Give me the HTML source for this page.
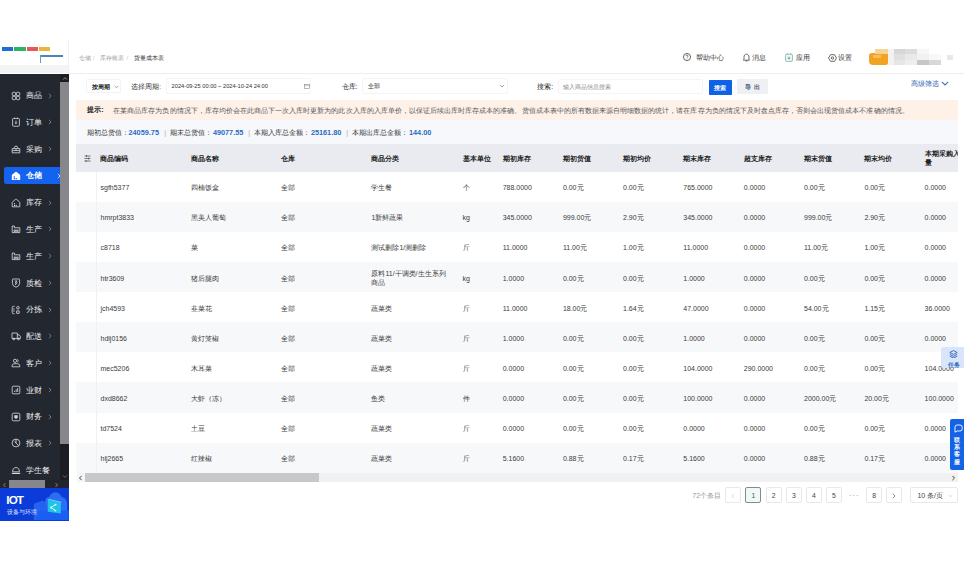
<!DOCTYPE html>
<html><head><meta charset="utf-8">
<style>
*{margin:0;padding:0;box-sizing:border-box}
html,body{width:964px;height:563px;overflow:hidden;background:#fff}
body{position:relative;font-family:"Liberation Sans",sans-serif;color:#333;font-size:7px;line-height:1}
.a{position:absolute;white-space:nowrap}
#sb{position:absolute;left:0;top:73.5px;width:69px;height:415px;background:#23272f;overflow:hidden}
.mi{position:absolute;left:0;width:60px;height:17px}
.mi .ic{position:absolute;left:10.5px;top:3.5px;line-height:0}
.mi .tx{position:absolute;left:25.8px;top:5.1px;font-size:8px;color:#eef0f3;line-height:8px}
.mi .ch{position:absolute;left:47.5px;top:5.5px}
.th{position:absolute;top:0.8px;height:28px;display:flex;align-items:center;font-weight:bold;color:#222;font-size:7px;line-height:8.8px}
.td{position:absolute;height:30px;display:flex;align-items:center;color:#3a3a3a;font-size:7px;line-height:8.7px;padding-top:3.9px}
.btn{position:absolute;border:1px solid #e6e8eb;border-radius:2px;background:#fff;display:flex;align-items:center;justify-content:center;font-size:6.8px;color:#444;padding-top:1.8px}
</style></head><body>

<div class="a" style="left:0;top:40px;width:68px;height:33.5px;background:#fff"></div>
<div class="a" style="left:0;top:64.5px;width:68px;height:8px;background:#f3f4f6"></div>
<div class="a" style="left:1.8px;top:47.4px;width:11.3px;height:3.7px;background:#1d6fd8"></div>
<div class="a" style="left:13.8px;top:47.4px;width:12px;height:3.7px;background:#2cb463"></div>
<div class="a" style="left:26.5px;top:47.4px;width:11.3px;height:3.7px;background:#e05a5a"></div>
<div class="a" style="left:38.9px;top:47.4px;width:11.2px;height:3.7px;background:#eeb33a"></div>
<div class="a" style="left:40px;top:55px;width:22.8px;height:1.8px;background:#4a86b8"></div>
<div class="a" style="left:40px;top:55px;width:1.2px;height:7.5px;background:#6a9cc6"></div>
<div class="a" style="left:68px;top:40px;width:1px;height:33.5px;background:#f0f0f0"></div>

<div id="sb">
<div class="mi" style="top:13.60px"><div class="ic"><svg width="10" height="10" viewBox="0 0 10 10"><g stroke="#d4d7dc" fill="none" stroke-width="0.85" stroke-linejoin="round"><circle cx="3" cy="3" r="1.9"/><circle cx="7" cy="3" r="1.9"/><circle cx="3" cy="7" r="1.9"/><circle cx="7" cy="7" r="1.9"/></g></svg></div><div class="tx">商品</div><div class="ch" style="left:47.5px"><svg width="4" height="6" viewBox="0 0 4 6"><path d="M1 0.8l2 2.2-2 2.2" stroke="#8a8d93" fill="none" stroke-width="0.8"/></svg></div></div>
<div class="mi" style="top:40.36px"><div class="ic"><svg width="10" height="10" viewBox="0 0 10 10"><g stroke="#d4d7dc" fill="none" stroke-width="0.85" stroke-linejoin="round"><rect x="1.6" y="1.4" width="6.8" height="7.8" rx="0.8"/><path d="M3.6 0.7v1.4M6.4 0.7v1.4"/><path d="M5 3.6v3M3.9 5.6L5 6.7l1.1-1.1"/></g></svg></div><div class="tx">订单</div><div class="ch" style="left:47.5px"><svg width="4" height="6" viewBox="0 0 4 6"><path d="M1 0.8l2 2.2-2 2.2" stroke="#8a8d93" fill="none" stroke-width="0.8"/></svg></div></div>
<div class="mi" style="top:67.12px"><div class="ic"><svg width="10" height="10" viewBox="0 0 10 10"><g stroke="#d4d7dc" fill="none" stroke-width="0.85" stroke-linejoin="round"><path d="M1.2 4.6h7.6v4.2H1.2z"/><path d="M2.8 4.6L4 2.2h2l1.2 2.4"/><path d="M1.2 6.6h7.6M5 4.6v2"/></g></svg></div><div class="tx">采购</div><div class="ch" style="left:47.5px"><svg width="4" height="6" viewBox="0 0 4 6"><path d="M1 0.8l2 2.2-2 2.2" stroke="#8a8d93" fill="none" stroke-width="0.8"/></svg></div></div>
<div class="mi" style="top:93.88px;left:4px;width:56px;background:#1463ee;border-radius:2px 0 0 2px"><div class="ic" style="left:7px"><svg width="10" height="10" viewBox="0 0 10 10"><path d="M0.8 9V4.6Q0.8 4 1.3 3.6L4.4 1.1Q5 0.6 5.6 1.1L8.7 3.6Q9.2 4 9.2 4.6V9z" fill="#fff"/><rect x="2.7" y="5.3" width="1.3" height="1.2" fill="#1463ee"/><rect x="2.7" y="7.1" width="1.3" height="1.2" fill="#1463ee"/><rect x="4.6" y="7.1" width="1.3" height="1.2" fill="#1463ee"/></svg></div><div class="tx" style="left:21.8px;color:#fff;font-weight:bold">仓储</div><div class="ch" style="left:53px"><svg width="4" height="6" viewBox="0 0 4 6"><path d="M1 0.8l2 2.2-2 2.2" stroke="#fff" fill="none" stroke-width="0.8"/></svg></div></div>
<div class="mi" style="top:120.64px"><div class="ic"><svg width="10" height="10" viewBox="0 0 10 10"><g stroke="#d4d7dc" fill="none" stroke-width="0.85" stroke-linejoin="round"><path d="M1.2 8.8V4.6Q1.2 4.1 1.6 3.8L4.5 1.4Q5 1 5.5 1.4L8.4 3.8Q8.8 4.1 8.8 4.6V8.8z"/></g><g fill="#d4d7dc"><rect x="3" y="5.2" width="1.1" height="1.1"/><rect x="3" y="6.9" width="1.1" height="1.1"/><rect x="4.7" y="6.9" width="1.1" height="1.1"/></g></svg></div><div class="tx">库存</div><div class="ch" style="left:47.5px"><svg width="4" height="6" viewBox="0 0 4 6"><path d="M1 0.8l2 2.2-2 2.2" stroke="#8a8d93" fill="none" stroke-width="0.8"/></svg></div></div>
<div class="mi" style="top:147.40px"><div class="ic"><svg width="10" height="10" viewBox="0 0 10 10"><g stroke="#d4d7dc" fill="none" stroke-width="0.85" stroke-linejoin="round"><path d="M1.2 8.6V2h2.2v1.8h5.4v4.8z"/><path d="M3 6h1.6v1.4H3zM5.6 6h1.6v1.4H5.6z"/></g></svg></div><div class="tx">生产</div><div class="ch" style="left:47.5px"><svg width="4" height="6" viewBox="0 0 4 6"><path d="M1 0.8l2 2.2-2 2.2" stroke="#8a8d93" fill="none" stroke-width="0.8"/></svg></div></div>
<div class="mi" style="top:174.16px"><div class="ic"><svg width="10" height="10" viewBox="0 0 10 10"><g stroke="#d4d7dc" fill="none" stroke-width="0.85" stroke-linejoin="round"><path d="M1.2 8.6V2h2.2v1.8h5.4v4.8z"/><path d="M3 6h1.6v1.4H3zM5.6 6h1.6v1.4H5.6z"/></g></svg></div><div class="tx">生产</div><div class="ch" style="left:47.5px"><svg width="4" height="6" viewBox="0 0 4 6"><path d="M1 0.8l2 2.2-2 2.2" stroke="#8a8d93" fill="none" stroke-width="0.8"/></svg></div></div>
<div class="mi" style="top:200.92px"><div class="ic"><svg width="10" height="10" viewBox="0 0 10 10"><g stroke="#d4d7dc" fill="none" stroke-width="0.85" stroke-linejoin="round"><path d="M1.4 1.8Q1.4 1 2.2 1H7.8Q8.6 1 8.6 1.8V5.4Q8.6 8.2 5 9.2 1.4 8.2 1.4 5.4z"/><path d="M3.7 3h2.4L4 5h2.2L4 7"/></g></svg></div><div class="tx">质检</div><div class="ch" style="left:47.5px"><svg width="4" height="6" viewBox="0 0 4 6"><path d="M1 0.8l2 2.2-2 2.2" stroke="#8a8d93" fill="none" stroke-width="0.8"/></svg></div></div>
<div class="mi" style="top:227.68px"><div class="ic"><svg width="10" height="10" viewBox="0 0 10 10"><g stroke="#d4d7dc" fill="none" stroke-width="0.85" stroke-linejoin="round"><path d="M3.6 1.3H2.4Q1.2 1.3 1.2 2.5v5Q1.2 8.7 2.4 8.7h1.2M2.2 4h1.4M2.2 6h1.4"/><circle cx="6.9" cy="2.8" r="1.3"/><rect x="5.6" y="5.9" width="2.6" height="2.4"/></g></svg></div><div class="tx">分拣</div><div class="ch" style="left:47.5px"><svg width="4" height="6" viewBox="0 0 4 6"><path d="M1 0.8l2 2.2-2 2.2" stroke="#8a8d93" fill="none" stroke-width="0.8"/></svg></div></div>
<div class="mi" style="top:254.44px"><div class="ic"><svg width="10" height="10" viewBox="0 0 10 10"><g stroke="#d4d7dc" fill="none" stroke-width="0.85" stroke-linejoin="round"><path d="M1 2h5.3v5.6H1zM6.3 3.8h1.8l1.2 1.5v2.3H6.3"/><circle cx="2.8" cy="8" r="0.9"/><circle cx="7.5" cy="8" r="0.9"/></g></svg></div><div class="tx">配送</div><div class="ch" style="left:47.5px"><svg width="4" height="6" viewBox="0 0 4 6"><path d="M1 0.8l2 2.2-2 2.2" stroke="#8a8d93" fill="none" stroke-width="0.8"/></svg></div></div>
<div class="mi" style="top:281.20px"><div class="ic"><svg width="10" height="10" viewBox="0 0 10 10"><g stroke="#d4d7dc" fill="none" stroke-width="0.85" stroke-linejoin="round"><circle cx="4" cy="2.8" r="1.6"/><path d="M6.2 1.4a1.5 1.5 0 0 1 0 2.8"/><path d="M1 8.8h7.8v-1Q8.8 6 6.8 5.7H3Q1 6 1 7.8z"/></g></svg></div><div class="tx">客户</div><div class="ch" style="left:47.5px"><svg width="4" height="6" viewBox="0 0 4 6"><path d="M1 0.8l2 2.2-2 2.2" stroke="#8a8d93" fill="none" stroke-width="0.8"/></svg></div></div>
<div class="mi" style="top:307.96px"><div class="ic"><svg width="10" height="10" viewBox="0 0 10 10"><g stroke="#d4d7dc" fill="none" stroke-width="0.85" stroke-linejoin="round"><rect x="1.2" y="1.2" width="7.6" height="7.6" rx="1"/><path d="M3.6 7v-1.2M5.2 7V4.2M6.7 7V3"/></g></svg></div><div class="tx">业财</div><div class="ch" style="left:47.5px"><svg width="4" height="6" viewBox="0 0 4 6"><path d="M1 0.8l2 2.2-2 2.2" stroke="#8a8d93" fill="none" stroke-width="0.8"/></svg></div></div>
<div class="mi" style="top:334.72px"><div class="ic"><svg width="10" height="10" viewBox="0 0 10 10"><g stroke="#d4d7dc" fill="none" stroke-width="0.85" stroke-linejoin="round"><rect x="1.2" y="1.2" width="7.6" height="7.6" rx="1.2"/></g><path d="M3.3 3.2h3.4v2.6L5 7 3.3 5.8z" fill="#d4d7dc"/></svg></div><div class="tx">财务</div><div class="ch" style="left:47.5px"><svg width="4" height="6" viewBox="0 0 4 6"><path d="M1 0.8l2 2.2-2 2.2" stroke="#8a8d93" fill="none" stroke-width="0.8"/></svg></div></div>
<div class="mi" style="top:361.48px"><div class="ic"><svg width="10" height="10" viewBox="0 0 10 10"><g stroke="#d4d7dc" fill="none" stroke-width="0.85" stroke-linejoin="round"><circle cx="5" cy="5" r="3.9"/><path d="M5 1.1V5l2.6 2.6M5 5l-1.6-1.4"/></g></svg></div><div class="tx">报表</div><div class="ch" style="left:47.5px"><svg width="4" height="6" viewBox="0 0 4 6"><path d="M1 0.8l2 2.2-2 2.2" stroke="#8a8d93" fill="none" stroke-width="0.8"/></svg></div></div>
<div class="mi" style="top:388.24px"><div class="ic"><svg width="10" height="10" viewBox="0 0 10 10"><g stroke="#d4d7dc" fill="none" stroke-width="0.85" stroke-linejoin="round"><path d="M1.6 6.8Q1.6 2.6 5 2.6T8.4 6.8z"/><path d="M0.8 8.4h8.4" stroke-width="1.2"/></g></svg></div><div class="tx">学生餐</div><div class="ch" style="left:99px"><svg width="4" height="6" viewBox="0 0 4 6"><path d="M1 0.8l2 2.2-2 2.2" stroke="#8a8d93" fill="none" stroke-width="0.8"/></svg></div></div>
<div class="a" style="left:60px;top:0;width:9px;height:406.5px;background:#1b1d22"></div>
<div class="a" style="left:60px;top:8.5px;width:9px;height:361.5px;background:#86878b"></div>
<svg class="a" style="left:61.5px;top:2px" width="6" height="5" viewBox="0 0 6 5"><path d="M1 3.6l2-2 2 2" stroke="#9a9ca0" fill="none" stroke-width="0.9"/></svg>
<svg class="a" style="left:61.5px;top:400px" width="6" height="5" viewBox="0 0 6 5"><path d="M1 1.4l2 2 2-2" stroke="#6a6c70" fill="none" stroke-width="0.9"/></svg>
<div class="a" style="left:0;top:406.2px;width:69px;height:8.5px;background:#22252c"></div>
<div class="a" style="left:9px;top:406.2px;width:36px;height:8.5px;background:#86878b"></div>
<svg class="a" style="left:2px;top:408px" width="5" height="6" viewBox="0 0 5 6"><path d="M3.5 1l-2 2 2 2" stroke="#8a8c90" fill="none" stroke-width="0.9"/></svg>
<svg class="a" style="left:54px;top:408px" width="5" height="6" viewBox="0 0 5 6"><path d="M1.5 1l2 2-2 2" stroke="#8a8c90" fill="none" stroke-width="0.9"/></svg>

</div>
<div class="a" style="left:0;top:488px;width:68.6px;height:32.5px;background:#0b3cd9;overflow:hidden">
<svg class="a" style="left:0;top:0;filter:blur(0.35px)" width="69" height="32" viewBox="0 0 69 32">
<path d="M45 32V14c0-3 2-5 4.5-5.2C50.5 6 53 4.3 55.5 4.3S60.5 6 61.5 9c3 .3 5.5 3 5.5 6.5V32z" fill="#2a6ef3"/>
<path d="M33.8 32V17.5c0-1 .6-1.8 1.5-2.2l6.5-2.5c1-.4 2 .1 2.6 .9L47 18v14z" fill="#2462ef"/>
<path d="M36 32l4-9.5h28.6V32z" fill="#1b5ef2"/>
<path d="M47.8 11.5l13 3.2v10.8l-13-1.8z" fill="#1fc4e9"/>
<path d="M47.8 11.5l1.5-.6 12.5 3.2-1 .6z" fill="#6fe0f5"/>
<path d="M51 19.5l4.5-2.8M51 19.5l4.3 3" stroke="#e6fbff" stroke-width="1" fill="none"/>
<circle cx="51" cy="19.5" r="0.9" fill="#f2fdff"/><circle cx="55.6" cy="16.6" r="0.9" fill="#f2fdff"/><circle cx="55.4" cy="22.6" r="0.9" fill="#f2fdff"/>
</svg>
<div class="a" style="left:6.3px;top:6px;font-size:11.7px;font-weight:bold;color:#fff;line-height:11px;letter-spacing:-0.9px">IOT</div>
<div class="a" style="left:6.5px;top:21px;font-size:5.9px;color:#dfe8ff;line-height:6px">设备与环境</div>
</div>

<div class="a" style="left:69px;top:72.8px;width:895px;height:1px;background:#eceef1"></div>
<div class="a" style="left:79.2px;top:54.5px;font-size:6px;color:#9a9ea6;line-height:6px">仓储</div>
<div class="a" style="left:92.8px;top:54.5px;font-size:6px;color:#c4c7cc;line-height:6px">/</div>
<div class="a" style="left:100px;top:54.5px;font-size:6px;color:#9a9ea6;line-height:6px">库存账表</div>
<div class="a" style="left:126.6px;top:54.5px;font-size:6px;color:#c4c7cc;line-height:6px">/</div>
<div class="a" style="left:133.6px;top:54.5px;font-size:6px;color:#333;line-height:6px">货量成本表</div>

<svg class="a" style="left:683px;top:52.8px" width="8" height="8" viewBox="0 0 8 8"><circle cx="4" cy="4" r="3.6" stroke="#444" fill="none" stroke-width="0.8"/><path d="M2.9 3.1c0-.7.5-1.1 1.1-1.1s1.1.4 1.1 1c0 .8-1 .9-1 1.6" stroke="#444" fill="none" stroke-width="0.7"/><circle cx="4" cy="5.9" r="0.45" fill="#444"/></svg>
<div class="a" style="left:695.5px;top:54px;font-size:6.9px;color:#333;line-height:7px">帮助中心</div>
<svg class="a" style="left:742.5px;top:53px" width="7" height="9" viewBox="0 0 7 9"><path d="M1 6.6V4c0-1.6 1-2.8 2.5-2.8S6 2.4 6 4v2.6l.6.6H.4z M2.6 8h1.8" stroke="#444" fill="none" stroke-width="0.8"/></svg>
<div class="a" style="left:752px;top:54px;font-size:6.9px;color:#333;line-height:7px">消息</div>
<svg class="a" style="left:785px;top:53px" width="8" height="9" viewBox="0 0 8 9"><rect x="0.6" y="1.2" width="6.8" height="7.2" rx="1" stroke="#58b4a2" fill="#f3faf8" stroke-width="0.75"/><path d="M2.2 0.5v1.4M5.8 0.5v1.4" stroke="#58b4a2" stroke-width="0.75"/><path d="M4 3.6v3M2.7 5.1h2.6" stroke="#e06a6a" stroke-width="0.9"/></svg>
<div class="a" style="left:795.7px;top:54px;font-size:6.9px;color:#333;line-height:7px">应用</div>
<svg class="a" style="left:828px;top:53.5px" width="9" height="8" viewBox="0 0 9 8"><path d="M2.5 0.7h4L8.5 4l-2 3.3h-4L0.5 4z" stroke="#444" fill="none" stroke-width="0.8"/><circle cx="4.5" cy="4" r="1.2" stroke="#444" fill="none" stroke-width="0.8"/></svg>
<div class="a" style="left:838px;top:54px;font-size:6.9px;color:#333;line-height:7px">设置</div>

<div class="a" style="left:869px;top:52.5px;width:18.5px;height:12.5px;background:#f1a424;border-radius:3px 1px 2px 4px;filter:blur(0.5px)"></div>
<div class="a" style="left:875px;top:48.5px;width:12.5px;height:5px;background:#f7d495;filter:blur(0.5px)"></div>
<div class="a" style="left:873px;top:54.5px;width:8px;height:3px;background:#f6c060;filter:blur(0.7px)"></div>
<div class="a" style="left:888px;top:48.5px;width:5.5px;height:16.5px;background:#f2f2f2"></div>
<div class="a" style="left:893.5px;top:48.5px;width:11.5px;height:5.5px;background:#d6d6d6"></div>
<div class="a" style="left:893.5px;top:54px;width:11.5px;height:5.5px;background:#e0e0e0"></div>
<div class="a" style="left:893.5px;top:59.5px;width:11.5px;height:5.5px;background:#e6e6e6"></div>
<div class="a" style="left:905px;top:48.5px;width:12px;height:5.5px;background:#dcdcdc"></div>
<div class="a" style="left:905px;top:54px;width:12px;height:5.5px;background:#e9e9e9"></div>
<div class="a" style="left:905px;top:59.5px;width:12px;height:5.5px;background:#eeeeee"></div>
<div class="a" style="left:917px;top:48.5px;width:12px;height:5.5px;background:#f6f6f6"></div>
<div class="a" style="left:917px;top:54px;width:12px;height:5.5px;background:#f1f1f1"></div>
<div class="a" style="left:917px;top:59.5px;width:12px;height:5.5px;background:#c6c6c6"></div>
<div class="a" style="left:929px;top:54px;width:12px;height:5.5px;background:#f8f8f8"></div>
<div class="a" style="left:929px;top:59.5px;width:12px;height:5.5px;background:#d8d8d8"></div>
<div class="a" style="left:947.4px;top:55px;width:6px;height:4.8px;background:#e8e8e8"></div>

<div class="a" style="left:86.4px;top:79.2px;width:34.2px;height:14px;border:1px solid #f2f3f5;border-radius:2px"></div>
<div class="a" style="left:92px;top:83.6px;font-size:6px;color:#222;line-height:6px;font-weight:bold">按周期</div>
<svg class="a" style="left:113.5px;top:84.5px" width="5" height="4" viewBox="0 0 5 4"><path d="M0.7 1l1.8 1.8L4.3 1" stroke="#777" fill="none" stroke-width="0.7"/></svg>
<div class="a" style="left:131.2px;top:82.8px;font-size:6.9px;color:#333;line-height:7px">选择周期</div><div class="a" style="left:159.3px;top:82.8px;font-size:6.5px;color:#555;line-height:7px">:</div>
<div class="a" style="left:166.3px;top:78.1px;width:145px;height:15.5px;border:1px solid #f3f4f6;border-radius:2px"></div>
<div class="a" style="left:171.6px;top:83.2px;font-size:5.7px;color:#333;line-height:6px">2024-09-25 00:00 ~ 2024-10-24 24:00</div>
<svg class="a" style="left:303.5px;top:84px" width="6" height="5" viewBox="0 0 6 5"><rect x="0.5" y="0.6" width="5" height="4" stroke="#888" fill="none" stroke-width="0.6"/><path d="M0.5 1.7h5" stroke="#888" stroke-width="0.5"/></svg>
<div class="a" style="left:341.6px;top:83px;font-size:6.5px;color:#222;line-height:7px">仓库:</div>
<div class="a" style="left:362px;top:78px;width:145.6px;height:15.6px;border:1px solid #f3f4f6;border-radius:2px"></div>
<div class="a" style="left:368px;top:83.2px;font-size:6px;color:#222;line-height:6px">全部</div>
<svg class="a" style="left:499px;top:84px" width="6" height="4" viewBox="0 0 6 4"><path d="M0.8 0.9l2.2 2.2 2.2-2.2" stroke="#777" fill="none" stroke-width="0.7"/></svg>
<div class="a" style="left:537.3px;top:83px;font-size:6.5px;color:#222;line-height:7px">搜索:</div>
<div class="a" style="left:558px;top:78.7px;width:144.6px;height:15px;border:1px solid #f3f4f6;border-radius:2px"></div>
<div class="a" style="left:563px;top:83.5px;font-size:6.1px;color:#888;line-height:6px">输入商品信息搜索</div>
<div class="a" style="left:709px;top:80px;width:22.8px;height:14.7px;background:#0f62e8;border-radius:0.8px"></div>
<div class="a" style="left:714px;top:84.6px;font-size:6px;color:#fff;line-height:6px;font-weight:bold">搜索</div>
<div class="a" style="left:737.3px;top:79px;width:30.7px;height:15.3px;background:#eef0f3;border-radius:1px"></div>
<div class="a" style="left:744.8px;top:83.8px;font-size:6px;color:#3f5675;line-height:6px;letter-spacing:3.3px;font-weight:bold">导出</div>
<div class="a" style="left:910.8px;top:80px;font-size:7px;color:#2f64b0;line-height:7px">高级筛选</div>
<svg class="a" style="left:940.5px;top:81px" width="8" height="5" viewBox="0 0 8 5"><path d="M0.8 0.8l3.2 3.2 3.2-3.2" stroke="#3a6fc4" fill="none" stroke-width="1.1"/></svg>

<div class="a" style="left:76.3px;top:100.4px;width:881.7px;height:19.6px;background:#fdf1e8"></div>
<div class="a" style="left:87.2px;top:106.3px;font-size:7px;color:#222;line-height:7px;font-weight:bold">提示:</div>
<div class="a" style="left:113.2px;top:106.5px;font-size:7px;color:#585858;line-height:7px;letter-spacing:0.04px">在某商品库存为负的情况下，库存均价会在此商品下一次入库时更新为的此次入库的入库单价，以保证后续出库时库存成本的准确。货值成本表中的所有数据来源自明细数据的统计，请在库存为负的情况下及时盘点库存，否则会出现货值成本不准确的情况。</div>

<div class="a" style="left:76.3px;top:120px;width:881.7px;height:24.2px;background:#f6f8fb"></div>
<div class="a" style="left:86.7px;top:129.2px;font-size:7px;color:#333;line-height:7px">期初总货值：</div>
<div class="a" style="left:128.5px;top:129px;font-size:7.3px;color:#2b6cc4;font-weight:bold;line-height:7px">24059.75</div>
<div class="a" style="left:164.2px;top:128.8px;font-size:7px;color:#aaa;line-height:7px">|</div>
<div class="a" style="left:170.4px;top:129.2px;font-size:7px;color:#333;line-height:7px">期末总货值：</div>
<div class="a" style="left:212.9px;top:129px;font-size:7.3px;color:#2b6cc4;font-weight:bold;line-height:7px">49077.55</div>
<div class="a" style="left:248.2px;top:128.8px;font-size:7px;color:#aaa;line-height:7px">|</div>
<div class="a" style="left:254.3px;top:129.2px;font-size:7px;color:#333;line-height:7px">本期入库总金额：</div>
<div class="a" style="left:310.9px;top:129px;font-size:7.3px;color:#2b6cc4;font-weight:bold;line-height:7px">25161.80</div>
<div class="a" style="left:346.3px;top:128.8px;font-size:7px;color:#aaa;line-height:7px">|</div>
<div class="a" style="left:351.9px;top:129.2px;font-size:7px;color:#333;line-height:7px">本期出库总金额：</div>
<div class="a" style="left:409px;top:129px;font-size:7.3px;color:#2b6cc4;font-weight:bold;line-height:7px">144.00</div>

<div class="a" style="left:76.3px;top:144.2px;width:881.7px;height:328.7px;overflow:hidden">
<div class="a" style="left:0;top:0;width:882px;height:27.4px;background:#e9ebf0"></div>
<svg class="a" style="left:8px;top:10.5px" width="7" height="7" viewBox="0 0 7 7"><path d="M0.5 1h6M0.5 3.5h6M0.5 6h6" stroke="#555" stroke-width="0.8"/><path d="M2.5 0v2M4.5 2.5v2M2 5v2" stroke="#555" stroke-width="0.8"/></svg>
<div class="th" style="left:24.2px"><span>商品编码</span></div>
<div class="th" style="left:114.6px"><span>商品名称</span></div>
<div class="th" style="left:204.7px"><span>仓库</span></div>
<div class="th" style="left:295.1px"><span>商品分类</span></div>
<div class="th" style="left:386.3px"><span>基本单位</span></div>
<div class="th" style="left:426.4px"><span>期初库存</span></div>
<div class="th" style="left:486.6px"><span>期初货值</span></div>
<div class="th" style="left:546.7px"><span>期初均价</span></div>
<div class="th" style="left:607.0px"><span>期末库存</span></div>
<div class="th" style="left:667.5px"><span>超支库存</span></div>
<div class="th" style="left:727.7px"><span>期末货值</span></div>
<div class="th" style="left:788.1px"><span>期末均价</span></div>
<div class="th" style="left:848.3px"><span>本期采购入<br>量</span></div>
<div class="a" style="left:0;top:27.4px;width:882px;height:30.2px;background:#fff"></div>
<div class="td" style="left:24.2px;top:27.4px"><span>sgfh5377</span></div>
<div class="td" style="left:114.6px;top:27.4px"><span>四楠饭盒</span></div>
<div class="td" style="left:204.7px;top:27.4px"><span>全部</span></div>
<div class="td" style="left:295.1px;top:27.4px"><span>学生餐</span></div>
<div class="td" style="left:386.3px;top:27.4px"><span>个</span></div>
<div class="td" style="left:426.4px;top:27.4px"><span>788.0000</span></div>
<div class="td" style="left:486.6px;top:27.4px"><span>0.00元</span></div>
<div class="td" style="left:546.7px;top:27.4px"><span>0.00元</span></div>
<div class="td" style="left:607.0px;top:27.4px"><span>765.0000</span></div>
<div class="td" style="left:667.5px;top:27.4px"><span>0.0000</span></div>
<div class="td" style="left:727.7px;top:27.4px"><span>0.00元</span></div>
<div class="td" style="left:788.1px;top:27.4px"><span>0.00元</span></div>
<div class="td" style="left:848.3px;top:27.4px"><span>0.0000</span></div>
<div class="a" style="left:0;top:57.5px;width:882px;height:30.2px;background:#f7f8fa"></div>
<div class="td" style="left:24.2px;top:57.5px"><span>hmrpt3833</span></div>
<div class="td" style="left:114.6px;top:57.5px"><span>黑美人葡萄</span></div>
<div class="td" style="left:204.7px;top:57.5px"><span>全部</span></div>
<div class="td" style="left:295.1px;top:57.5px"><span>1新鲜蔬果</span></div>
<div class="td" style="left:386.3px;top:57.5px"><span>kg</span></div>
<div class="td" style="left:426.4px;top:57.5px"><span>345.0000</span></div>
<div class="td" style="left:486.6px;top:57.5px"><span>999.00元</span></div>
<div class="td" style="left:546.7px;top:57.5px"><span>2.90元</span></div>
<div class="td" style="left:607.0px;top:57.5px"><span>345.0000</span></div>
<div class="td" style="left:667.5px;top:57.5px"><span>0.0000</span></div>
<div class="td" style="left:727.7px;top:57.5px"><span>999.00元</span></div>
<div class="td" style="left:788.1px;top:57.5px"><span>2.90元</span></div>
<div class="td" style="left:848.3px;top:57.5px"><span>0.0000</span></div>
<div class="a" style="left:0;top:87.7px;width:882px;height:30.2px;background:#fff"></div>
<div class="td" style="left:24.2px;top:87.7px"><span>c8718</span></div>
<div class="td" style="left:114.6px;top:87.7px"><span>菜</span></div>
<div class="td" style="left:204.7px;top:87.7px"><span>全部</span></div>
<div class="td" style="left:295.1px;top:87.7px"><span>测试删除1/测删除</span></div>
<div class="td" style="left:386.3px;top:87.7px"><span>斤</span></div>
<div class="td" style="left:426.4px;top:87.7px"><span>11.0000</span></div>
<div class="td" style="left:486.6px;top:87.7px"><span>11.00元</span></div>
<div class="td" style="left:546.7px;top:87.7px"><span>1.00元</span></div>
<div class="td" style="left:607.0px;top:87.7px"><span>11.0000</span></div>
<div class="td" style="left:667.5px;top:87.7px"><span>0.0000</span></div>
<div class="td" style="left:727.7px;top:87.7px"><span>11.00元</span></div>
<div class="td" style="left:788.1px;top:87.7px"><span>1.00元</span></div>
<div class="td" style="left:848.3px;top:87.7px"><span>0.0000</span></div>
<div class="a" style="left:0;top:117.8px;width:882px;height:30.2px;background:#f7f8fa"></div>
<div class="td" style="left:24.2px;top:117.8px"><span>htr3609</span></div>
<div class="td" style="left:114.6px;top:117.8px"><span>猪后腿肉</span></div>
<div class="td" style="left:204.7px;top:117.8px"><span>全部</span></div>
<div class="td" style="left:295.1px;top:117.8px"><span>原料11/干调类/生生系列<br>商品</span></div>
<div class="td" style="left:386.3px;top:117.8px"><span>kg</span></div>
<div class="td" style="left:426.4px;top:117.8px"><span>1.0000</span></div>
<div class="td" style="left:486.6px;top:117.8px"><span>0.00元</span></div>
<div class="td" style="left:546.7px;top:117.8px"><span>0.00元</span></div>
<div class="td" style="left:607.0px;top:117.8px"><span>1.0000</span></div>
<div class="td" style="left:667.5px;top:117.8px"><span>0.0000</span></div>
<div class="td" style="left:727.7px;top:117.8px"><span>0.00元</span></div>
<div class="td" style="left:788.1px;top:117.8px"><span>0.00元</span></div>
<div class="td" style="left:848.3px;top:117.8px"><span>0.0000</span></div>
<div class="a" style="left:0;top:147.9px;width:882px;height:30.2px;background:#fff"></div>
<div class="td" style="left:24.2px;top:147.9px"><span>jch4593</span></div>
<div class="td" style="left:114.6px;top:147.9px"><span>韭菜花</span></div>
<div class="td" style="left:204.7px;top:147.9px"><span>全部</span></div>
<div class="td" style="left:295.1px;top:147.9px"><span>蔬菜类</span></div>
<div class="td" style="left:386.3px;top:147.9px"><span>斤</span></div>
<div class="td" style="left:426.4px;top:147.9px"><span>11.0000</span></div>
<div class="td" style="left:486.6px;top:147.9px"><span>18.00元</span></div>
<div class="td" style="left:546.7px;top:147.9px"><span>1.64元</span></div>
<div class="td" style="left:607.0px;top:147.9px"><span>47.0000</span></div>
<div class="td" style="left:667.5px;top:147.9px"><span>0.0000</span></div>
<div class="td" style="left:727.7px;top:147.9px"><span>54.00元</span></div>
<div class="td" style="left:788.1px;top:147.9px"><span>1.15元</span></div>
<div class="td" style="left:848.3px;top:147.9px"><span>36.0000</span></div>
<div class="a" style="left:0;top:178.0px;width:882px;height:30.2px;background:#f7f8fa"></div>
<div class="td" style="left:24.2px;top:178.0px"><span>hdlj0156</span></div>
<div class="td" style="left:114.6px;top:178.0px"><span>黄灯笼椒</span></div>
<div class="td" style="left:204.7px;top:178.0px"><span>全部</span></div>
<div class="td" style="left:295.1px;top:178.0px"><span>蔬菜类</span></div>
<div class="td" style="left:386.3px;top:178.0px"><span>斤</span></div>
<div class="td" style="left:426.4px;top:178.0px"><span>1.0000</span></div>
<div class="td" style="left:486.6px;top:178.0px"><span>0.00元</span></div>
<div class="td" style="left:546.7px;top:178.0px"><span>0.00元</span></div>
<div class="td" style="left:607.0px;top:178.0px"><span>1.0000</span></div>
<div class="td" style="left:667.5px;top:178.0px"><span>0.0000</span></div>
<div class="td" style="left:727.7px;top:178.0px"><span>0.00元</span></div>
<div class="td" style="left:788.1px;top:178.0px"><span>0.00元</span></div>
<div class="td" style="left:848.3px;top:178.0px"><span>0.0000</span></div>
<div class="a" style="left:0;top:208.2px;width:882px;height:30.2px;background:#fff"></div>
<div class="td" style="left:24.2px;top:208.2px"><span>mec5206</span></div>
<div class="td" style="left:114.6px;top:208.2px"><span>木耳菜</span></div>
<div class="td" style="left:204.7px;top:208.2px"><span>全部</span></div>
<div class="td" style="left:295.1px;top:208.2px"><span>蔬菜类</span></div>
<div class="td" style="left:386.3px;top:208.2px"><span>斤</span></div>
<div class="td" style="left:426.4px;top:208.2px"><span>0.0000</span></div>
<div class="td" style="left:486.6px;top:208.2px"><span>0.00元</span></div>
<div class="td" style="left:546.7px;top:208.2px"><span>0.00元</span></div>
<div class="td" style="left:607.0px;top:208.2px"><span>104.0000</span></div>
<div class="td" style="left:667.5px;top:208.2px"><span>290.0000</span></div>
<div class="td" style="left:727.7px;top:208.2px"><span>0.00元</span></div>
<div class="td" style="left:788.1px;top:208.2px"><span>0.00元</span></div>
<div class="td" style="left:848.3px;top:208.2px"><span>104.0000</span></div>
<div class="a" style="left:0;top:238.3px;width:882px;height:30.2px;background:#f7f8fa"></div>
<div class="td" style="left:24.2px;top:238.3px"><span>dxd8662</span></div>
<div class="td" style="left:114.6px;top:238.3px"><span>大虾（冻）</span></div>
<div class="td" style="left:204.7px;top:238.3px"><span>全部</span></div>
<div class="td" style="left:295.1px;top:238.3px"><span>鱼类</span></div>
<div class="td" style="left:386.3px;top:238.3px"><span>件</span></div>
<div class="td" style="left:426.4px;top:238.3px"><span>0.0000</span></div>
<div class="td" style="left:486.6px;top:238.3px"><span>0.00元</span></div>
<div class="td" style="left:546.7px;top:238.3px"><span>0.00元</span></div>
<div class="td" style="left:607.0px;top:238.3px"><span>100.0000</span></div>
<div class="td" style="left:667.5px;top:238.3px"><span>0.0000</span></div>
<div class="td" style="left:727.7px;top:238.3px"><span>2000.00元</span></div>
<div class="td" style="left:788.1px;top:238.3px"><span>20.00元</span></div>
<div class="td" style="left:848.3px;top:238.3px"><span>100.0000</span></div>
<div class="a" style="left:0;top:268.4px;width:882px;height:30.2px;background:#fff"></div>
<div class="td" style="left:24.2px;top:268.4px"><span>td7524</span></div>
<div class="td" style="left:114.6px;top:268.4px"><span>土豆</span></div>
<div class="td" style="left:204.7px;top:268.4px"><span>全部</span></div>
<div class="td" style="left:295.1px;top:268.4px"><span>蔬菜类</span></div>
<div class="td" style="left:386.3px;top:268.4px"><span>斤</span></div>
<div class="td" style="left:426.4px;top:268.4px"><span>0.0000</span></div>
<div class="td" style="left:486.6px;top:268.4px"><span>0.00元</span></div>
<div class="td" style="left:546.7px;top:268.4px"><span>0.00元</span></div>
<div class="td" style="left:607.0px;top:268.4px"><span>0.0000</span></div>
<div class="td" style="left:667.5px;top:268.4px"><span>0.0000</span></div>
<div class="td" style="left:727.7px;top:268.4px"><span>0.00元</span></div>
<div class="td" style="left:788.1px;top:268.4px"><span>0.00元</span></div>
<div class="td" style="left:848.3px;top:268.4px"><span>0.0000</span></div>
<div class="a" style="left:0;top:298.5px;width:882px;height:30.2px;background:#f7f8fa"></div>
<div class="td" style="left:24.2px;top:298.5px"><span>hlj2665</span></div>
<div class="td" style="left:114.6px;top:298.5px"><span>红辣椒</span></div>
<div class="td" style="left:204.7px;top:298.5px"><span>全部</span></div>
<div class="td" style="left:295.1px;top:298.5px"><span>蔬菜类</span></div>
<div class="td" style="left:386.3px;top:298.5px"><span>斤</span></div>
<div class="td" style="left:426.4px;top:298.5px"><span>5.1600</span></div>
<div class="td" style="left:486.6px;top:298.5px"><span>0.88元</span></div>
<div class="td" style="left:546.7px;top:298.5px"><span>0.17元</span></div>
<div class="td" style="left:607.0px;top:298.5px"><span>5.1600</span></div>
<div class="td" style="left:667.5px;top:298.5px"><span>0.0000</span></div>
<div class="td" style="left:727.7px;top:298.5px"><span>0.88元</span></div>
<div class="td" style="left:788.1px;top:298.5px"><span>0.17元</span></div>
<div class="td" style="left:848.3px;top:298.5px"><span>0.0000</span></div>
<div class="a" style="left:19.6px;top:27.4px;width:0.8px;height:301.3px;background:#f0f1f4"></div>
</div>
<div class="a" style="left:76.6px;top:473.3px;width:881.4px;height:8.5px;background:#f1f1f1"></div>
<div class="a" style="left:76.6px;top:473.3px;width:8.6px;height:8.5px;background:#f5f5f5"></div>
<div class="a" style="left:85.2px;top:473.3px;width:233.8px;height:8.5px;background:#c8c8c8"></div>
<svg class="a" style="left:78.3px;top:474.5px" width="5" height="6" viewBox="0 0 5 6"><path d="M3.6 0.9L1.5 3l2.1 2.1" stroke="#444" fill="none" stroke-width="1"/></svg>
<svg class="a" style="left:951px;top:474.5px" width="5" height="6" viewBox="0 0 5 6"><path d="M1.4 0.9L3.5 3 1.4 5.1" stroke="#444" fill="none" stroke-width="1"/></svg>

<div class="a" style="left:692.3px;top:492px;font-size:7px;color:#999;line-height:7px">72个条目</div>
<div class="btn" style="left:725.4px;top:487.3px;width:16px;height:16px;color:#ccc"><svg width="4" height="6" viewBox="0 0 4 6"><path d="M3 0.8L1 3l2 2.2" stroke="#c8c8c8" fill="none" stroke-width="0.7"/></svg></div>
<div class="btn" style="left:745.3px;top:487.3px;width:16px;height:16px;border-color:#808c8e;background:#f0f8f8;color:#555"><span>1</span></div>
<div class="btn" style="left:765.6px;top:487.3px;width:16px;height:16px;"><span>2</span></div>
<div class="btn" style="left:786px;top:487.3px;width:16px;height:16px;"><span>3</span></div>
<div class="btn" style="left:806px;top:487.3px;width:16px;height:16px;"><span>4</span></div>
<div class="btn" style="left:826px;top:487.3px;width:16px;height:16px;"><span>5</span></div>
<div class="a" style="left:848.5px;top:491.5px;font-size:9px;color:#aaa;letter-spacing:0.6px;line-height:7px">···</div>
<div class="btn" style="left:866.2px;top:487.3px;width:16px;height:16px">8</div>
<div class="btn" style="left:886.4px;top:487.3px;width:16px;height:16px"><svg width="4" height="6" viewBox="0 0 4 6"><path d="M1 0.8L3 3 1 5.2" stroke="#555" fill="none" stroke-width="0.7"/></svg></div>
<div class="btn" style="left:910.4px;top:487.3px;width:47.2px;height:16px;justify-content:flex-start;padding-left:6px;padding-top:1px;font-size:7px"><span>10 条/页</span><svg style="position:absolute;left:37px;top:6px" width="5" height="4" viewBox="0 0 5 4"><path d="M0.7 1l1.8 1.8L4.3 1" stroke="#bbb" fill="none" stroke-width="0.6"/></svg></div>
<div class="a" style="left:941.4px;top:346.7px;width:22.6px;height:21.7px;background:#d9e5fa;border-radius:3px 0 0 3px"></div>
<svg class="a" style="left:948.8px;top:349.6px" width="9" height="8.5" viewBox="0 0 9 8.5"><path d="M4.5 0.6L8.2 2.5 4.5 4.4 0.8 2.5z" stroke="#3568b8" fill="none" stroke-width="0.95" stroke-linejoin="round"/><path d="M0.8 4.4l3.7 1.9 3.7-1.9M0.8 6.2l3.7 1.8 3.7-1.8" stroke="#3568b8" fill="none" stroke-width="0.95" stroke-linejoin="round"/></svg>
<div class="a" style="left:947.8px;top:361.6px;font-size:5.7px;color:#2f63b8;line-height:6px;font-weight:bold">任务</div>
<div class="a" style="left:949.7px;top:418.8px;width:14.3px;height:51.6px;background:#1463e6;border-radius:2px 0 0 2px"></div>
<svg class="a" style="left:953.5px;top:423.6px" width="9" height="9" viewBox="0 0 9 9"><path d="M3 1h3a2.2 2.2 0 0 1 2.2 2.2v1.6A2.2 2.2 0 0 1 6 7H3.2L1 8.2V3.2A2.2 2.2 0 0 1 3 1z" stroke="#fff" fill="none" stroke-width="0.9"/></svg>
<div class="a" style="left:954px;top:435.5px;font-size:6.3px;color:#fff;line-height:7.4px;white-space:normal;width:7px;font-weight:bold">联系客服</div>

<script>
(function(){
  var t=document.createElement('span');
  t.style.cssText='position:absolute;left:-9999px;top:0;font-size:100px;font-family:"Liberation Sans",sans-serif;white-space:nowrap';
  t.textContent='中文中文中文中文中文';
  document.body.appendChild(t);
  var w=t.getBoundingClientRect().width;
  document.body.removeChild(t);
  if(w>=950||w<100) return;
  var extra=1-w/1000;
  var re=/[　-〿一-鿿＀-￯]+/g;
  var walker=document.createTreeWalker(document.body,NodeFilter.SHOW_TEXT,null);
  var nodes=[];while(walker.nextNode())nodes.push(walker.currentNode);
  nodes.forEach(function(n){
    var s=n.nodeValue;re.lastIndex=0;if(!re.test(s))return;re.lastIndex=0;
    var p=n.parentNode;if(!p||p.tagName==='SCRIPT'||p.tagName==='STYLE')return;
    var cs=getComputedStyle(p);var fs=parseFloat(cs.fontSize)||7;var ls=parseFloat(cs.letterSpacing)||0;
    var frag=document.createDocumentFragment();var last=0;var m;
    while((m=re.exec(s))){
      if(m.index>last)frag.appendChild(document.createTextNode(s.slice(last,m.index)));
      var sp=document.createElement('span');sp.style.letterSpacing=(ls+extra*fs)+'px';sp.style.webkitTextStroke=((parseInt(cs.fontWeight)>=600?0.08:0.03)*fs)+'px currentColor';sp.textContent=m[0];
      frag.appendChild(sp);last=m.index+m[0].length;
    }
    if(last<s.length)frag.appendChild(document.createTextNode(s.slice(last)));
    p.replaceChild(frag,n);
  });
})();
</script>
</body></html>
